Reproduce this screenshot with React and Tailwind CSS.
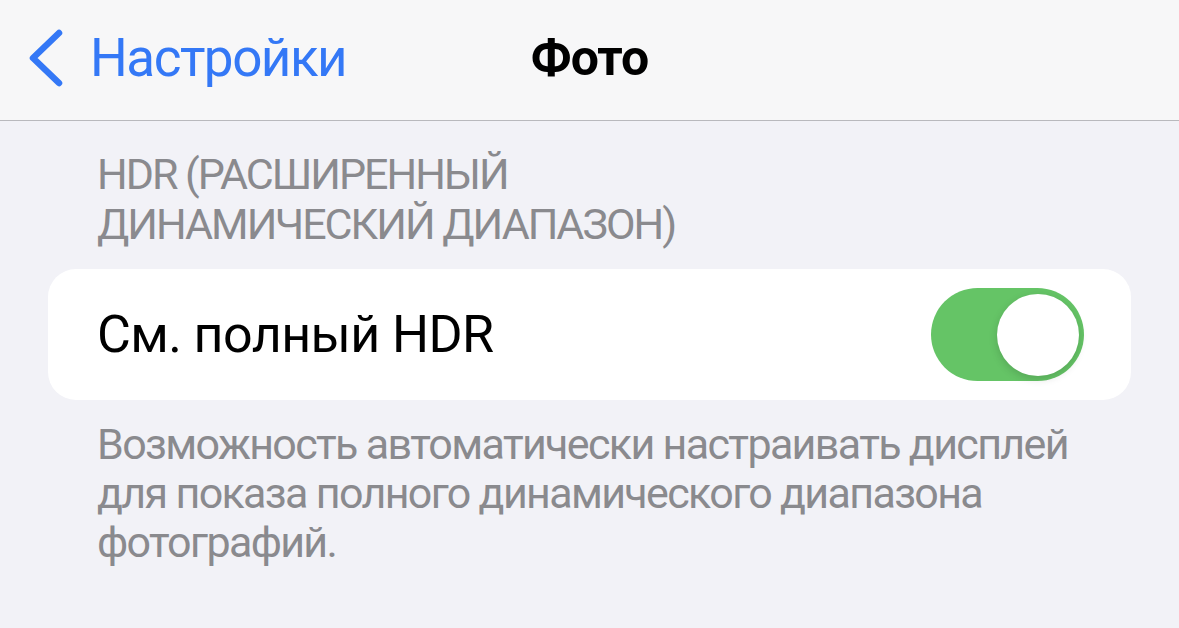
export default function App() {
  return (
    <div
      className="w-[1179px] h-[628px] overflow-hidden bg-[#f2f2f7]"
      style={{ fontFamily: "Roboto, 'Liberation Sans', sans-serif" }}
    >
      {/* nav bar */}
      <div className="relative h-[121px] bg-[#f7f7f8] border-b border-[#b9b9bd] flex items-center">
        <div className="flex items-center pl-[28px] pb-[4px]">
          <svg width="36" height="58" viewBox="0 0 36 58" className="mr-[26px]">
            <path d="M31 4 L5 29 L31 54" fill="none" stroke="#3478f6" strokeWidth="6.5" strokeLinecap="round" strokeLinejoin="round" />
          </svg>
          <span className="text-[53px] leading-none text-[#3478f6] tracking-[-1.5px]">Настройки</span>
        </div>
        <div className="absolute left-0 right-0 top-0 bottom-[4px] flex items-center justify-center pointer-events-none">
          <span className="text-[50px] leading-none font-bold text-black tracking-[-1px]">Фото</span>
        </div>
      </div>

      {/* section header */}
      <div className="pl-[97px] pt-[28px] text-[43px] leading-[50px] text-[#8a8a8e] tracking-[-2px] uppercase">
        <div>HDR (Расширенный</div>
        <div>динамический диапазон)</div>
      </div>

      {/* card */}
      <div className="mx-[48px] mt-[20px] h-[131px] bg-white rounded-[28px] flex items-center justify-between pl-[49px] pr-[47px]">
        <span className="text-[52px] leading-none text-black tracking-[-0.6px]">См. полный HDR</span>
        <div className="relative w-[153px] h-[93px] rounded-full bg-[#65c466]">
          <div className="absolute right-[5px] top-[5.5px] w-[82px] h-[82px] rounded-full bg-white shadow-[0_3px_8px_rgba(0,0,0,0.15)]" />
        </div>
      </div>

      {/* footer */}
      <div className="pl-[97px] pr-[40px] pt-[20px] text-[43px] leading-[49px] text-[#8a8a8e] tracking-[-1.65px]">
        Возможность автоматически настраивать дисплей для показа полного динамического диапазона фотографий.
      </div>
    </div>
  );
}
